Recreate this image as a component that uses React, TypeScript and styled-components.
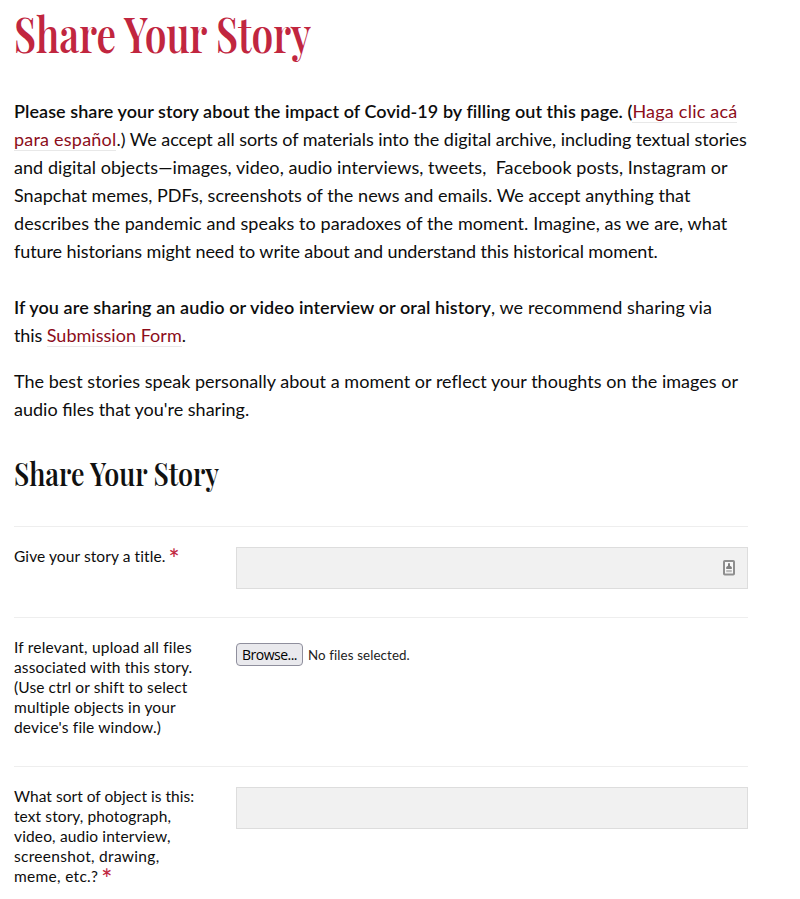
import React from 'react';
import styled, { createGlobalStyle } from 'styled-components';

const GlobalStyle = createGlobalStyle`
  * { box-sizing: border-box; }
  body { margin: 0; background: #fff; color: #0d0d0d; font-family: Lato, "Open Sans", sans-serif; }
`;

const Page = styled.main`
  width: 800px;
  height: 899px;
  overflow: hidden;
  padding: 0 52px 0 14px;
`;

const Title = styled.h1`
  margin: 0;
  height: 97px;
  width: max-content;
  font: 600 48px/66px "Playfair Display", "Liberation Serif", serif;
  color: #c1263f;
  transform: scaleX(0.809);
  transform-origin: left;
`;

const Subtitle = styled.h2`
  margin: 0;
  height: 103px;
  width: max-content;
  font: 600 32px/100px "Playfair Display", "Liberation Serif", serif;
  color: #111;
  transform: scaleX(0.838);
  transform-origin: left;
`;

const Paragraph = styled.p<{ $gap: number }>`
  margin: 0 0 ${(p) => p.$gap}px;
  font-size: 18px;
  line-height: 28px;
`;

const Line = styled.span`
  display: block;
  white-space: pre;
`;

const Run = styled.span<{ $track?: number }>`
  letter-spacing: ${(p) => p.$track ?? 0}px;
`;

const Strong = styled(Run).attrs({ as: 'strong' })`
  font-weight: 600;
`;

const Link = styled.a<{ $track?: number }>`
  color: #8c0d1a;
  text-decoration: none;
  box-shadow: 0 1px 0 #e8e8e8;
  letter-spacing: ${(p) => p.$track ?? 0}px;
`;

const Form = styled.form`
  display: flex;
  flex-direction: column;
`;

const Field = styled.div`
  display: grid;
  grid-template-columns: 222px 512px;
  align-items: start;
  border-top: 1px solid #eee;
  padding: 20px 0 28px;
`;

const Label = styled.label`
  margin: -1px 0 1px;
  font-size: 15.5px;
  line-height: 20px;
`;

const Required = styled.span`
  display: inline-block;
  height: 20px;
  margin-left: 3px;
  font-size: 26px;
  font-weight: 500;
  line-height: 27px;
  vertical-align: top;
  color: #c1263f;
`;

const InputBox = styled.div`
  display: flex;
  align-items: center;
  justify-content: flex-end;
  height: 42px;
  padding-right: 12px;
  border: 1px solid #ddd;
  background: #f1f1f1;
`;

const FilePicker = styled.div`
  display: flex;
  align-items: center;
  gap: 5px;
  margin-top: 5px;
`;

const BrowseButton = styled.button`
  width: 67px;
  height: 23px;
  padding: 0;
  border: 1px solid #8f8f9d;
  border-radius: 4px;
  background: #e9e9ed;
  color: #000;
  font: 14px/20px "Open Sans", sans-serif;
  letter-spacing: -0.5px;
`;

const FileStatus = styled.span`
  font-size: 13.3px;
  letter-spacing: 0.12px;
  color: #222;
`;

const ContactIcon = () => (
  <svg width="12" height="16" viewBox="0 0 12 16">
    <rect x="1" y="1" width="10" height="13.5" rx="0.8" fill="#f8f8f8" stroke="#8f8f8f" strokeWidth="2" />
    <path d="M5 3.2h2v2.6L8.8 7v2H3.2V7L5 5.8Z" fill="#808080" />
    <path d="M3.2 10h5.6v2.2H3.2Z" fill="#bdbdbd" />
  </svg>
);

type LabelLine = [string, number];

const LabelText = ({ lines, required }: { lines: LabelLine[]; required?: boolean }) => (
  <Label>
    {lines.map(([text, track], i) => (
      <Line key={text}>
        <Run $track={track}>{text}</Run>
        {required && i === lines.length - 1 && <Required>*</Required>}
      </Line>
    ))}
  </Label>
);

export default function App() {
  return (
    <>
      <GlobalStyle />
      <Page>
        <Title>Share Your Story</Title>
        <Paragraph $gap={28}>
          <Line>
            <Strong $track={0.058}>Please share your story about the impact of Covid-19 by filling out this page. (</Strong>
            <Link $track={0.22}>Haga clic acá</Link>
          </Line>
          <Line>
            <Link $track={0.22}>para español</Link>
            <Run $track={-0.05}>.) We accept all sorts of materials into the digital archive, including textual stories</Run>
          </Line>
          <Line><Run $track={0.065}>and digital objects—images, video, audio interviews, tweets,&nbsp; Facebook posts, Instagram or</Run></Line>
          <Line><Run $track={0.045}>Snapchat memes, PDFs, screenshots of the news and emails. We accept anything that</Run></Line>
          <Line><Run $track={0.088}>describes the pandemic and speaks to paradoxes of the moment. Imagine, as we are, what</Run></Line>
          <Line><Run $track={-0.09}>future historians might need to write about and understand this historical moment.</Run></Line>
        </Paragraph>
        <Paragraph $gap={18}>
          <Line>
            <Strong $track={0.09}>If you are sharing an audio or video interview or oral history</Strong>
            <Run $track={0.1}>, we recommend sharing via</Run>
          </Line>
          <Line>
            <Run $track={-0.1}>this </Run>
            <Link $track={0.03}>Submission Form</Link>
            <Run>.</Run>
          </Line>
        </Paragraph>
        <Paragraph $gap={0}>
          <Line><Run $track={0.026}>The best stories speak personally about a moment or reflect your thoughts on the images or</Run></Line>
          <Line><Run>audio files that you're sharing.</Run></Line>
        </Paragraph>
        <Subtitle>Share Your Story</Subtitle>
        <Form>
          <Field>
            <LabelText required lines={[['Give your story a title.', 0.09]]} />
            <InputBox><ContactIcon /></InputBox>
          </Field>
          <Field>
            <LabelText
              lines={[
                ['If relevant, upload all files', 0.19],
                ['associated with this story.', 0.12],
                ['(Use ctrl or shift to select', 0.11],
                ['multiple objects in your', 0.13],
                ["device's file window.)", 0.167],
              ]}
            />
            <FilePicker>
              <BrowseButton type="button">Browse...</BrowseButton>
              <FileStatus>No files selected.</FileStatus>
            </FilePicker>
          </Field>
          <Field>
            <LabelText
              required
              lines={[
                ['What sort of object is this:', 0.03],
                ['text story, photograph,', 0.096],
                ['video, audio interview,', 0.15],
                ['screenshot, drawing,', 0.3],
                ['meme, etc.?', 0.3],
              ]}
            />
            <InputBox />
          </Field>
        </Form>
      </Page>
    </>
  );
}
